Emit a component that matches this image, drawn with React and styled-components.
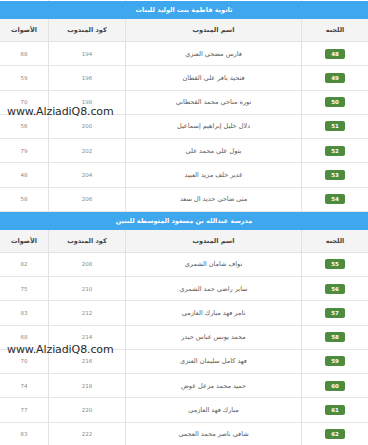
import React from 'react'
import styled, { createGlobalStyle } from 'styled-components'

const sections = [
  {
    title: 'ثانوية فاطمة بنت الوليد للبنات',
    rows: [
      [48, 'فارس مضحي العنزي', 194, 68],
      [49, 'فتحية باقر علي القطان', 196, 59],
      [50, 'نورة مناحي محمد القحطاني', 198, 70],
      [51, 'دلال خليل إبراهيم إسماعيل', 200, 56],
      [52, 'بتول علي محمد علي', 202, 79],
      [53, 'غدير خلف مزيد العبيد', 204, 48],
      [54, 'منى ضاحي حديد ال سعد', 206, 58],
    ],
  },
  {
    title: 'مدرسة عبدالله بن مسعود المتوسطة للبنين',
    rows: [
      [55, 'نواف شامان الشمري', 208, 82],
      [56, 'سابر راضي حمد الشمري', 210, 75],
      [57, 'تامر فهد مبارك العازمي', 212, 83],
      [58, 'محمد يونس عباس حيدر', 214, 68],
      [59, 'فهد كامل سليمان العنزي', 216, 70],
      [60, 'حميد محمد مزعل عوض', 218, 74],
      [61, 'مبارك فهد العازمي', 220, 77],
      [62, 'شافي ناصر محمد العجمي', 222, 63],
    ],
  },
]

export default function App() {
  return (
    <>
      <Global />
      <Page dir="rtl">
        <Remnant>
          <Cell />
          <Cell />
          <Cell />
          <Cell />
        </Remnant>
        {sections.map((s) => (
          <Section key={s.title}>
            <TitleBar>{s.title}</TitleBar>
            <HeadRow>
              <Cell>اللجنه</Cell>
              <Cell>اسم المندوب</Cell>
              <Cell>كود المندوب</Cell>
              <Cell>الأصوات</Cell>
            </HeadRow>
            {s.rows.map(([no, name, code, votes]) => (
              <Row key={no}>
                <Cell>
                  <Badge>{no}</Badge>
                </Cell>
                <Cell $name>{name}</Cell>
                <Cell $num>{code}</Cell>
                <Cell $num>{votes}</Cell>
              </Row>
            ))}
          </Section>
        ))}
        <Watermark $top={105}>www.AlziadiQ8.com</Watermark>
        <Watermark $top={343}>www.AlziadiQ8.com</Watermark>
      </Page>
    </>
  )
}

const Global = createGlobalStyle`
  html, body {
    margin: 0;
    padding: 0;
    background: #fff;
  }
  body {
    font-family: "DejaVu Sans", "Noto Sans", sans-serif;
  }
`

const Page = styled.div`
  position: relative;
  width: 368px;
  height: 445px;
  overflow: hidden;
`

const cols = `
  display: grid;
  grid-template-columns: 67px 176px 77px 48px;
`

const Remnant = styled.div`
  ${cols}
  height: 1px;
`

const Section = styled.div`
  display: flex;
  flex-direction: column;
`

const TitleBar = styled.div`
  height: 18px;
  background: #3ea7ee;
  color: #fff;
  font-size: 6.5px;
  font-weight: bold;
  display: flex;
  align-items: center;
  justify-content: center;
`

const Cell = styled.div`
  border-left: 1px solid #e2e2e2;
  display: flex;
  align-items: center;
  justify-content: center;
  color: ${(p) => (p.$num ? '#8a8a8a' : p.$name ? '#5a5a5a' : '#444')};
  font-size: ${(p) => (p.$num ? '5.5px' : '6.5px')};
  white-space: nowrap;
  &:last-child {
    border-left: none;
  }
`

const HeadRow = styled.div`
  ${cols}
  height: 23px;
  background: #f4f4f4;
  border-bottom: 1px solid #e2e2e2;
  box-sizing: border-box;
  font-weight: bold;
  ${Cell} {
    color: #444;
    font-size: 6.5px;
  }
`

const Row = styled.div`
  ${cols}
  height: 24.25px;
  border-bottom: 1px solid #e6e6e6;
  box-sizing: border-box;
`

const Badge = styled.span`
  display: inline-flex;
  align-items: center;
  justify-content: center;
  width: 20px;
  height: 10px;
  border-radius: 2px;
  background: #4f8b3e;
  color: #fff;
  font-size: 5.5px;
  font-weight: bold;
`

const Watermark = styled.div`
  position: absolute;
  top: ${(p) => p.$top}px;
  left: 7px;
  direction: ltr;
  font-family: "DejaVu Sans", sans-serif;
  font-size: 11px;
  color: #2a2a2a;
  letter-spacing: -0.1px;
`
